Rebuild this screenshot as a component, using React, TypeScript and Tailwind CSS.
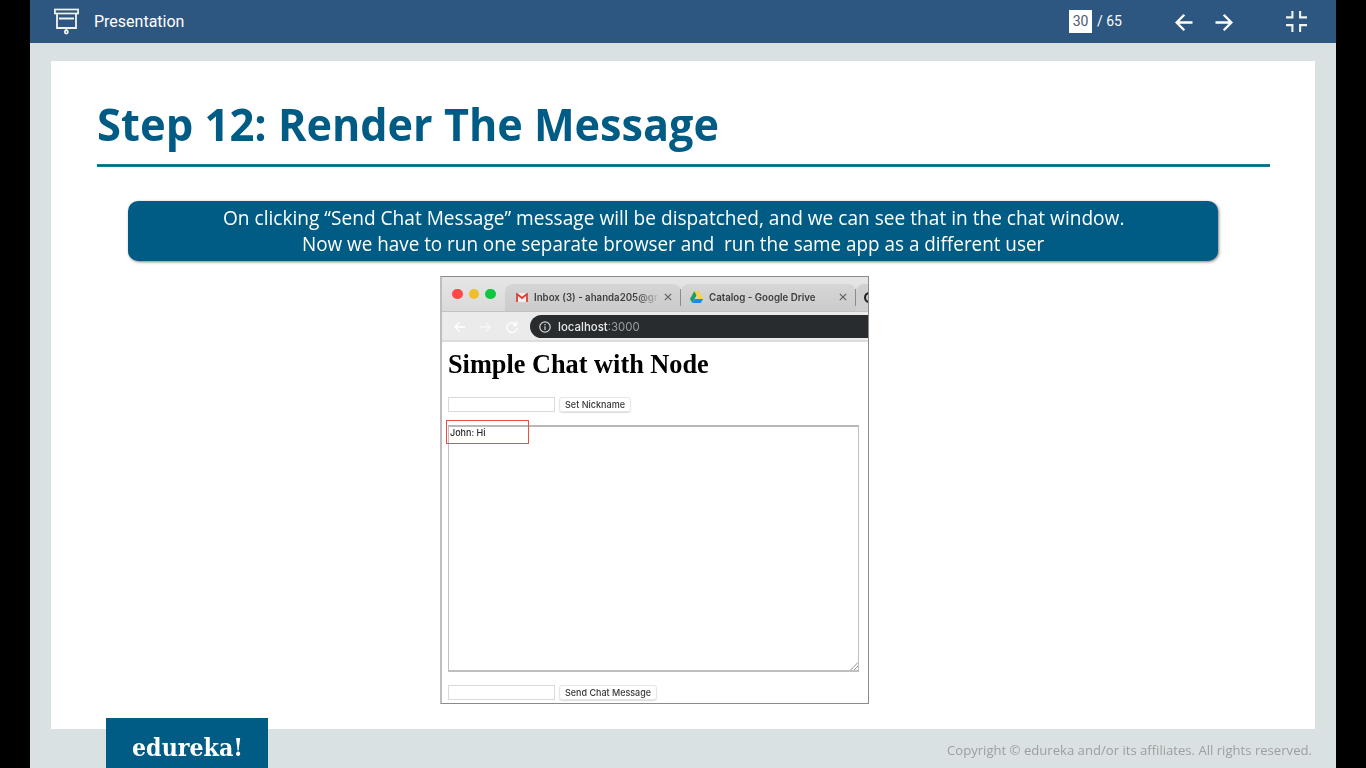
import { useLayoutEffect, useRef, useState } from "react";

type FitProps = { text: string; width: number; className?: string; children?: React.ReactNode };

/* One line of text, scaled horizontally to occupy a given width. */
function Fit({ text, width, className = "", children }: FitProps) {
  const ref = useRef<HTMLSpanElement>(null);
  const [scale, setScale] = useState(1);
  useLayoutEffect(() => {
    if (ref.current) setScale(width / ref.current.offsetWidth);
  }, [width, text]);
  return (
    <span className={`block shrink-0 whitespace-pre ${className}`} style={{ width }}>
      <span ref={ref} className="inline-block origin-left" style={{ transform: `scaleX(${scale})` }}>
        {children ?? text}
      </span>
    </span>
  );
}

function TopBar() {
  return (
    <header className="flex h-[43px] shrink-0 items-center bg-[#2d5780] font-[Roboto,sans-serif] text-white">
      <svg className="ml-6 mt-[-1px] shrink-0" width="25" height="27" viewBox="0 0 25 27" fill="none" stroke="#f2f5ee">
        <rect x="0.9" y="1.5" width="23.2" height="4" strokeWidth="1.7" />
        <path d="M3 5.5V20H22V5.5M5 10.500H20" strokeWidth="1.800" />
        <path d="M12.3 20.500V22.500" strokeWidth="1.8" />
        <circle cx="12.3" cy="24" r="1.600" strokeWidth="1.700" />
      </svg>
      <Fit text="Presentation" width={90} className="ml-[15px] text-[16px] leading-[20px]" />
      <span className="ml-[885px] flex h-[23px] w-[23px] shrink-0 items-center justify-center bg-white text-[14px] text-[#4c5a70]">30</span>
      <Fit text="/ 65" width={25} className="ml-[5px] mt-[-1px] text-[14px] leading-[20px]" />
      <svg className="ml-[53px] mt-[2px] shrink-0" width="18" height="18" viewBox="0 0 18 18" fill="none" stroke="white" strokeWidth="2.3">
        <path d="M17.5 8.500H1.5M9.3 0.800L1.600 8.500l7.700 7.700" />
      </svg>
      <svg className="ml-[22px] mt-[2px] shrink-0" width="18" height="18" viewBox="0 0 18 18" fill="none" stroke="white" strokeWidth="2.3">
        <path d="M0.5 8.500h16M8.700 0.800l7.700 7.700-7.700 7.700" />
      </svg>
      <svg className="ml-[53px] shrink-0" width="21" height="21" viewBox="0 0 21 21" fill="none" stroke="#eef3ee" strokeWidth="2.100">
        <path d="M6.400 0v6.400H0M14.100 0v6.400H21M0 14.100h6.400V21M21 14.100h-6.900V21" />
      </svg>
    </header>
  );
}

function Close({ className = "" }: { className?: string }) {
  return (
    <svg className={`shrink-0 ${className}`} width="8" height="8" viewBox="0 0 8 8" stroke="#606060" strokeWidth="1.2">
      <path d="M0.8 0.8l6.4 6.4M7.2 0.8L0.8 7.2" />
    </svg>
  );
}

function ChatWindow() {
  return (
    <div className="ml-[389px] mt-[15px] flex h-[428px] w-[429px] flex-col overflow-hidden border border-l-2 border-[#8b8b8b] border-l-[#bdbdbd] bg-white font-[Inter,sans-serif]">
      <div className="flex h-[34px] shrink-0 items-stretch bg-linear-to-b from-[#e6e6e6] to-[#dadada]">
        <div className="flex items-center gap-[6px] pl-[10px]">
          <span className="size-[10.500px] rounded-full bg-[#ff4a47]" />
          <span className="size-[10.500px] rounded-full bg-[#f2bd2b]" />
          <span className="size-[10.500px] rounded-full bg-[#0fc63f]" />
        </div>
        <div className="ml-[9.500px] mt-[7px] flex w-[176px] shrink-0 items-center rounded-t-lg bg-linear-to-b from-[#d5d5d5] to-[#cbcbcb] pb-px">
          <svg className="ml-[11px] shrink-0" width="12" height="9" viewBox="0 0 12 9">
            <path d="M0 0h12v9H0z" fill="#eee" />
            <path d="M1 9V1l5 4 5-4v8" fill="none" stroke="#dd3e35" strokeWidth="1.8" />
          </svg>
          <Fit text="Inbox (3) - ahanda205@gr" width={124} className="ml-[6px] text-[10px] font-semibold leading-[16px]">
            <span className="bg-linear-to-r from-[#3c3c3c] from-82% to-[#c4c4c4] bg-clip-text text-transparent">Inbox (3) - ahanda205@gr</span>
          </Fit>
          <Close className="ml-[6px]" />
          <span className="ml-[8px] h-[17px] w-px shrink-0 bg-[#8c8c8c]" />
        </div>
        <div className="mt-[7px] flex w-[175px] shrink-0 items-center rounded-t-lg bg-linear-to-b from-[#d6d6d6] to-[#cbcbcb] pb-px">
          <svg className="ml-[9px] shrink-0" width="13" height="12" viewBox="0 0 13 12">
            <path d="M4.3 0L0 8l2.3 4 4.4-8z" fill="#17a05e" />
            <path d="M4.3 0h4.5L13 8H8.7z" fill="#ffcf48" />
            <path d="M2.3 12L4.5 8H13l-2.2 4z" fill="#2584f5" />
          </svg>
          <Fit text="Catalog - Google Drive" width={107} className="ml-[6px] text-[10px] font-semibold leading-[16px] text-[#3c3c3c]" />
          <Close className="ml-[23px]" />
          <span className="ml-[8px] h-[17px] w-px shrink-0 bg-[#8c8c8c]" />
        </div>
        <div className="mt-[7px] flex w-[13px] shrink-0 items-center overflow-hidden rounded-tl-lg bg-[#d0d0d0] pb-px">
          <span className="ml-[8px] size-[11px] shrink-0 rounded-full border-[2.500px] border-[#222]" />
        </div>
      </div>
      <div className="flex h-[31px] shrink-0 items-center border-b-2 border-t border-b-[#dcdcdc] border-t-[#c2c2c2] bg-[#ebebeb] pt-px">
        <svg className="ml-[12px] shrink-0" width="64" height="12" viewBox="0 0 64 12" fill="none" stroke="white" strokeWidth="1.3">
          <path d="M11 6H1M5.5 1.5L1 6l4.500 4.500" />
          <path d="M26 6h10M31.500 1.500L36 6l-4.500 4.500" opacity="0.6" />
          <path d="M62 3.500A5 5 0 1 0 63 7M62.500 0.500v3.500H59" />
        </svg>
        <div className="ml-[12px] flex h-[23px] flex-1 items-center rounded-l-full bg-[#282c2f]">
          <svg className="ml-[9px] shrink-0" width="12" height="12" viewBox="0 0 12 12" fill="none" stroke="#d6d6d6" strokeWidth="1.2">
            <circle cx="6" cy="6" r="5.200" />
            <path d="M6 5.300V9M6 3v1.200" />
          </svg>
          <Fit text="localhost:3000" width={82} className="ml-[7px] text-[12px] leading-[18px] text-[#e8e8e8]">
            <span className="font-medium">localhost</span>
            <span className="text-[#9b9d9f]">:3000</span>
          </Fit>
        </div>
      </div>
      <Fit text="Simple Chat with Node" width={261} className="ml-[6px] mt-[7px] h-[30px] font-['Liberation_Serif',serif] text-[27px] font-bold leading-[30px] text-black" />
      <div className="ml-[6px] mt-[18px] flex h-[15px] shrink-0 items-stretch gap-1">
        <span className="w-[107px] border border-[#dadada]" />
        <span className="flex w-[72px] items-center justify-center rounded-[3px] border border-[#e6e6e6] shadow-[0_1px_1px_#ddd]">
          <Fit text="Set Nickname" width={60} className="text-[9.500px] font-medium leading-[13px] text-[#3a3a3a]" />
        </span>
      </div>
      <div className="relative ml-[6px] mt-[13px] h-[247px] w-[411px] shrink-0 border-[1.500px] border-b-2 border-[#c0c0c0] border-t-2 border-t-[#b8b8b8]">
        <Fit text="John: Hi" width={36} className="ml-px mt-[-1px] text-[9.500px] font-medium leading-[14px] text-[#2a2a2a]" />
        <span className="absolute -left-[3px] -top-[7px] h-[24px] w-[83px] border border-[#f04a4a]" />
        <svg className="absolute bottom-0 right-0" width="8" height="8" viewBox="0 0 8 8" stroke="#888" strokeWidth="0.9">
          <path d="M0.500 8L8 0.500M4 8l4-4" />
        </svg>
      </div>
      <div className="ml-[6px] mt-[13px] flex h-[15px] shrink-0 items-stretch gap-1">
        <span className="w-[107px] border border-[#dadada]" />
        <span className="flex w-[98px] items-center justify-center rounded-[3px] border border-[#e6e6e6] shadow-[0_1px_1px_#ddd]">
          <Fit text="Send Chat Message" width={86} className="text-[9.500px] font-medium leading-[13px] text-[#3a3a3a]" />
        </span>
      </div>
    </div>
  );
}

export default function App() {
  return (
    <div className="flex h-screen w-screen justify-center overflow-hidden bg-black">
      <div className="flex w-[1306px] flex-col bg-[#dae1e3]">
        <TopBar />
        <main className="ml-[21px] mt-[18px] h-[668px] w-[1264px] shrink-0 bg-white pt-[33px] font-['Open_Sans',sans-serif]">
          <h1 className="ml-[46px] flex text-[45px] font-bold leading-[60px] text-[#005c84]">
            <Fit text="Step 12: " width={181} />
            <Fit text="Render The Message" width={441} />
          </h1>
          <div className="ml-[46px] mt-[10px] h-[3px] w-[1173px] border-y border-[#178099] bg-[#00678a]" />
          <section className="ml-[77px] mt-[34px] flex h-[60px] w-[1090px] flex-col items-center rounded-[10px] bg-[#005c84] pt-[4px] text-[19.500px] leading-[26px] text-white shadow-[1px_1px_3px_rgba(0,0,0,0.5)]">
            <Fit text="On clicking “Send Chat Message” message will be dispatched, and we can see that in the chat window." width={901} />
            <Fit text="Now we have to run one separate browser and  run the same app as a different user" width={742} />
          </section>
          <ChatWindow />
        </main>
        <footer className="flex h-[39px] shrink-0 items-start">
          <div className="z-10 ml-[76px] mt-[-11px] flex h-[50px] w-[162px] shrink-0 justify-center bg-[#005c84] pt-[13px]">
            <Fit text="edureka!" width={111} className="font-['DejaVu_Serif',serif] text-[25px] font-bold leading-[33px] text-white" />
          </div>
          <Fit
            text="Copyright © edureka and/or its affiliates. All rights reserved."
            width={365}
            className="ml-[679px] mt-[12px] font-['Open_Sans',sans-serif] text-[13.500px] leading-[18px] text-[#9d9e9f]"
          />
        </footer>
      </div>
    </div>
  );
}
